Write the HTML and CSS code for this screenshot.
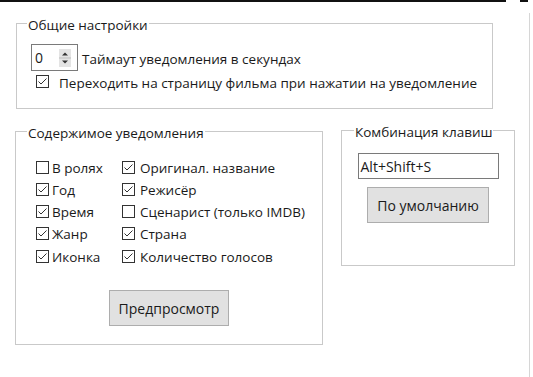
FILE: index.html
```html
<!DOCTYPE html>
<html>
<head>
<meta charset="utf-8">
<link rel="stylesheet" href="styles.css">
</head>
<body>
<div class="topbar"><span class="seg1"></span><span class="seg2"></span></div>
<div class="page">
  <fieldset class="group g1">
    <legend>Общие настройки</legend>
    <div class="spinrow">
      <div class="spin">
        <span class="spin-val">0</span>
        <svg class="spin-btns" width="12" height="18" viewBox="0 0 12 18">
          <rect x="0" y="0" width="12" height="18" fill="#e4e4e4"/>
          <line x1="0" y1="9" x2="12" y2="9" stroke="#bdbdbd" stroke-width="1"/>
          <path d="M3 6.5 L6 3.5 L9 6.5 Z" fill="#333"/>
          <path d="M3 11.5 L6 14.5 L9 11.5 Z" fill="#333"/>
        </svg>
      </div>
      <span class="spinlabel">Таймаут уведомления в секундах</span>
    </div>
    <div class="checkrow">
      <svg class="cb" width="13" height="13" viewBox="0 0 13 13"><rect x="0.5" y="0.5" width="12" height="12" fill="#fff" stroke="#333"/><path d="M2.5 6.5 L5 9 L10.5 3.5" fill="none" stroke="#333" stroke-width="1"/></svg>
      <span class="cblabel">Переходить на страницу фильма при нажатии на уведомление</span>
    </div>
  </fieldset>

  <div class="bottom">
    <fieldset class="group g2">
      <legend>Содержимое уведомления</legend>
      <div class="grid">
        <div class="item"><svg class="cb" width="13" height="13" viewBox="0 0 13 13"><rect x="0.5" y="0.5" width="12" height="12" fill="#fff" stroke="#333"/></svg><span class="lbl">В ролях</span></div>
        <div class="item c2"><svg class="cb" width="13" height="13" viewBox="0 0 13 13"><rect x="0.5" y="0.5" width="12" height="12" fill="#fff" stroke="#333"/><path d="M2.5 6.5 L5 9 L10.5 3.5" fill="none" stroke="#333" stroke-width="1"/></svg><span class="lbl">Оригинал. название</span></div>
        <div class="item"><svg class="cb" width="13" height="13" viewBox="0 0 13 13"><rect x="0.5" y="0.5" width="12" height="12" fill="#fff" stroke="#333"/><path d="M2.5 6.5 L5 9 L10.5 3.5" fill="none" stroke="#333" stroke-width="1"/></svg><span class="lbl">Год</span></div>
        <div class="item c2"><svg class="cb" width="13" height="13" viewBox="0 0 13 13"><rect x="0.5" y="0.5" width="12" height="12" fill="#fff" stroke="#333"/><path d="M2.5 6.5 L5 9 L10.5 3.5" fill="none" stroke="#333" stroke-width="1"/></svg><span class="lbl">Режисёр</span></div>
        <div class="item"><svg class="cb" width="13" height="13" viewBox="0 0 13 13"><rect x="0.5" y="0.5" width="12" height="12" fill="#fff" stroke="#333"/><path d="M2.5 6.5 L5 9 L10.5 3.5" fill="none" stroke="#333" stroke-width="1"/></svg><span class="lbl">Время</span></div>
        <div class="item c2"><svg class="cb" width="13" height="13" viewBox="0 0 13 13"><rect x="0.5" y="0.5" width="12" height="12" fill="#fff" stroke="#333"/></svg><span class="lbl">Сценарист (только IMDB)</span></div>
        <div class="item"><svg class="cb" width="13" height="13" viewBox="0 0 13 13"><rect x="0.5" y="0.5" width="12" height="12" fill="#fff" stroke="#333"/><path d="M2.5 6.5 L5 9 L10.5 3.5" fill="none" stroke="#333" stroke-width="1"/></svg><span class="lbl">Жанр</span></div>
        <div class="item c2"><svg class="cb" width="13" height="13" viewBox="0 0 13 13"><rect x="0.5" y="0.5" width="12" height="12" fill="#fff" stroke="#333"/><path d="M2.5 6.5 L5 9 L10.5 3.5" fill="none" stroke="#333" stroke-width="1"/></svg><span class="lbl">Страна</span></div>
        <div class="item"><svg class="cb" width="13" height="13" viewBox="0 0 13 13"><rect x="0.5" y="0.5" width="12" height="12" fill="#fff" stroke="#333"/><path d="M2.5 6.5 L5 9 L10.5 3.5" fill="none" stroke="#333" stroke-width="1"/></svg><span class="lbl">Иконка</span></div>
        <div class="item c2"><svg class="cb" width="13" height="13" viewBox="0 0 13 13"><rect x="0.5" y="0.5" width="12" height="12" fill="#fff" stroke="#333"/><path d="M2.5 6.5 L5 9 L10.5 3.5" fill="none" stroke="#333" stroke-width="1"/></svg><span class="lbl">Количество голосов</span></div>
      </div>
      <div class="btnwrap"><div class="btn preview">Предпросмотр</div></div>
    </fieldset>

    <fieldset class="group g3">
      <legend>Комбинация клавиш</legend>
      <div class="keyinput">Alt+Shift+S</div>
      <div class="btn defaults">По умолчанию</div>
    </fieldset>
  </div>
</div>
</body>
</html>
```
FILE: styles.css
```css
html, body {
  margin: 0;
  padding: 0;
  background: #ffffff;
}
body {
  font-family: "Open Sans", "Noto Sans", sans-serif;
  font-size: 13.5px;
  color: #1a1a1a;
  width: 533px;
  height: 377px;
  overflow: hidden;
  white-space: nowrap;
}
.topbar {
  display: flex;
  height: 2px;
}
.seg1 {
  width: 506px;
  background: #111;
}
.seg2 {
  width: 8px;
  margin-left: 14px;
  background: #111;
}
.page {
  width: 529px;
  height: 373px;
  border-right: 1px solid #d6d6d6;
  border-bottom: 1px solid #d6d6d6;
}
.group {
  margin: 0;
  padding: 0;
  border: 1px solid #c9c9c9;
  box-sizing: border-box;
  min-width: 0;
}
.group legend {
  padding: 4px 1px 0;
  line-height: 16px;
  height: 20px;
  box-sizing: border-box;
}
.g1 {
  margin: 11px 0 0 16px;
  width: 477px;
  height: 96px;
}
.g1 legend { margin-left: 10px; }
.spinrow {
  display: flex;
  align-items: center;
  margin: 11px 0 0 14px;
  height: 27px;
}
.spin {
  width: 47px;
  height: 27px;
  box-sizing: border-box;
  border: 1px solid #7a7a7a;
  display: flex;
  align-items: center;
}
.spin-val {
  margin-left: 3px;
  flex: 1;
  line-height: 16px;
  font-size: 14px;
}
.spin-btns {
  margin-right: 6px;
  display: block;
}
.spinlabel {
  margin-left: 4px;
  line-height: 16px;
  padding-top: 3px;
}
.checkrow {
  display: flex;
  align-items: flex-start;
  margin: 4px 0 0 19px;
}
.cb {
  display: block;
  flex: none;
}
.cblabel {
  margin-left: 10px;
  line-height: 16px;
}
.bottom {
  display: flex;
  align-items: flex-start;
  margin-top: 11px;
}
.g2 {
  margin: 1px 0 0 15px;
  width: 308px;
  height: 224px;
}
.g2 legend { margin-left: 11px; }
.g3 {
  margin: 0 0 0 18px;
  width: 174px;
  height: 146px;
}
.g3 legend { margin-left: 12px; }
.grid {
  display: grid;
  grid-template-columns: 86px auto;
  grid-auto-rows: 22.25px;
  margin: 15px 0 0 20px;
}
.item {
  display: flex;
  align-items: center;
}
.lbl {
  margin-left: 3px;
  line-height: 16px;
  padding-top: 1px;
}
.c2 .lbl { margin-left: 5px; }
.btnwrap {
  display: flex;
  justify-content: center;
  margin-top: 23px;
}
.btn {
  box-sizing: border-box;
  background: #e1e1e1;
  border: 1px solid #adadad;
  display: flex;
  align-items: center;
  justify-content: center;
  font-size: 14px;
  padding-top: 1px;
}
.preview {
  width: 120px;
  height: 36px;
}
.keyinput {
  box-sizing: border-box;
  width: 141px;
  height: 26px;
  margin: 13px auto 0;
  border: 1px solid #7a7a7a;
  padding-left: 2px;
  padding-top: 1px;
  display: flex;
  align-items: center;
  font-size: 14px;
}
.defaults {
  width: 122px;
  height: 36px;
  margin: 8px auto 0;
}
```
